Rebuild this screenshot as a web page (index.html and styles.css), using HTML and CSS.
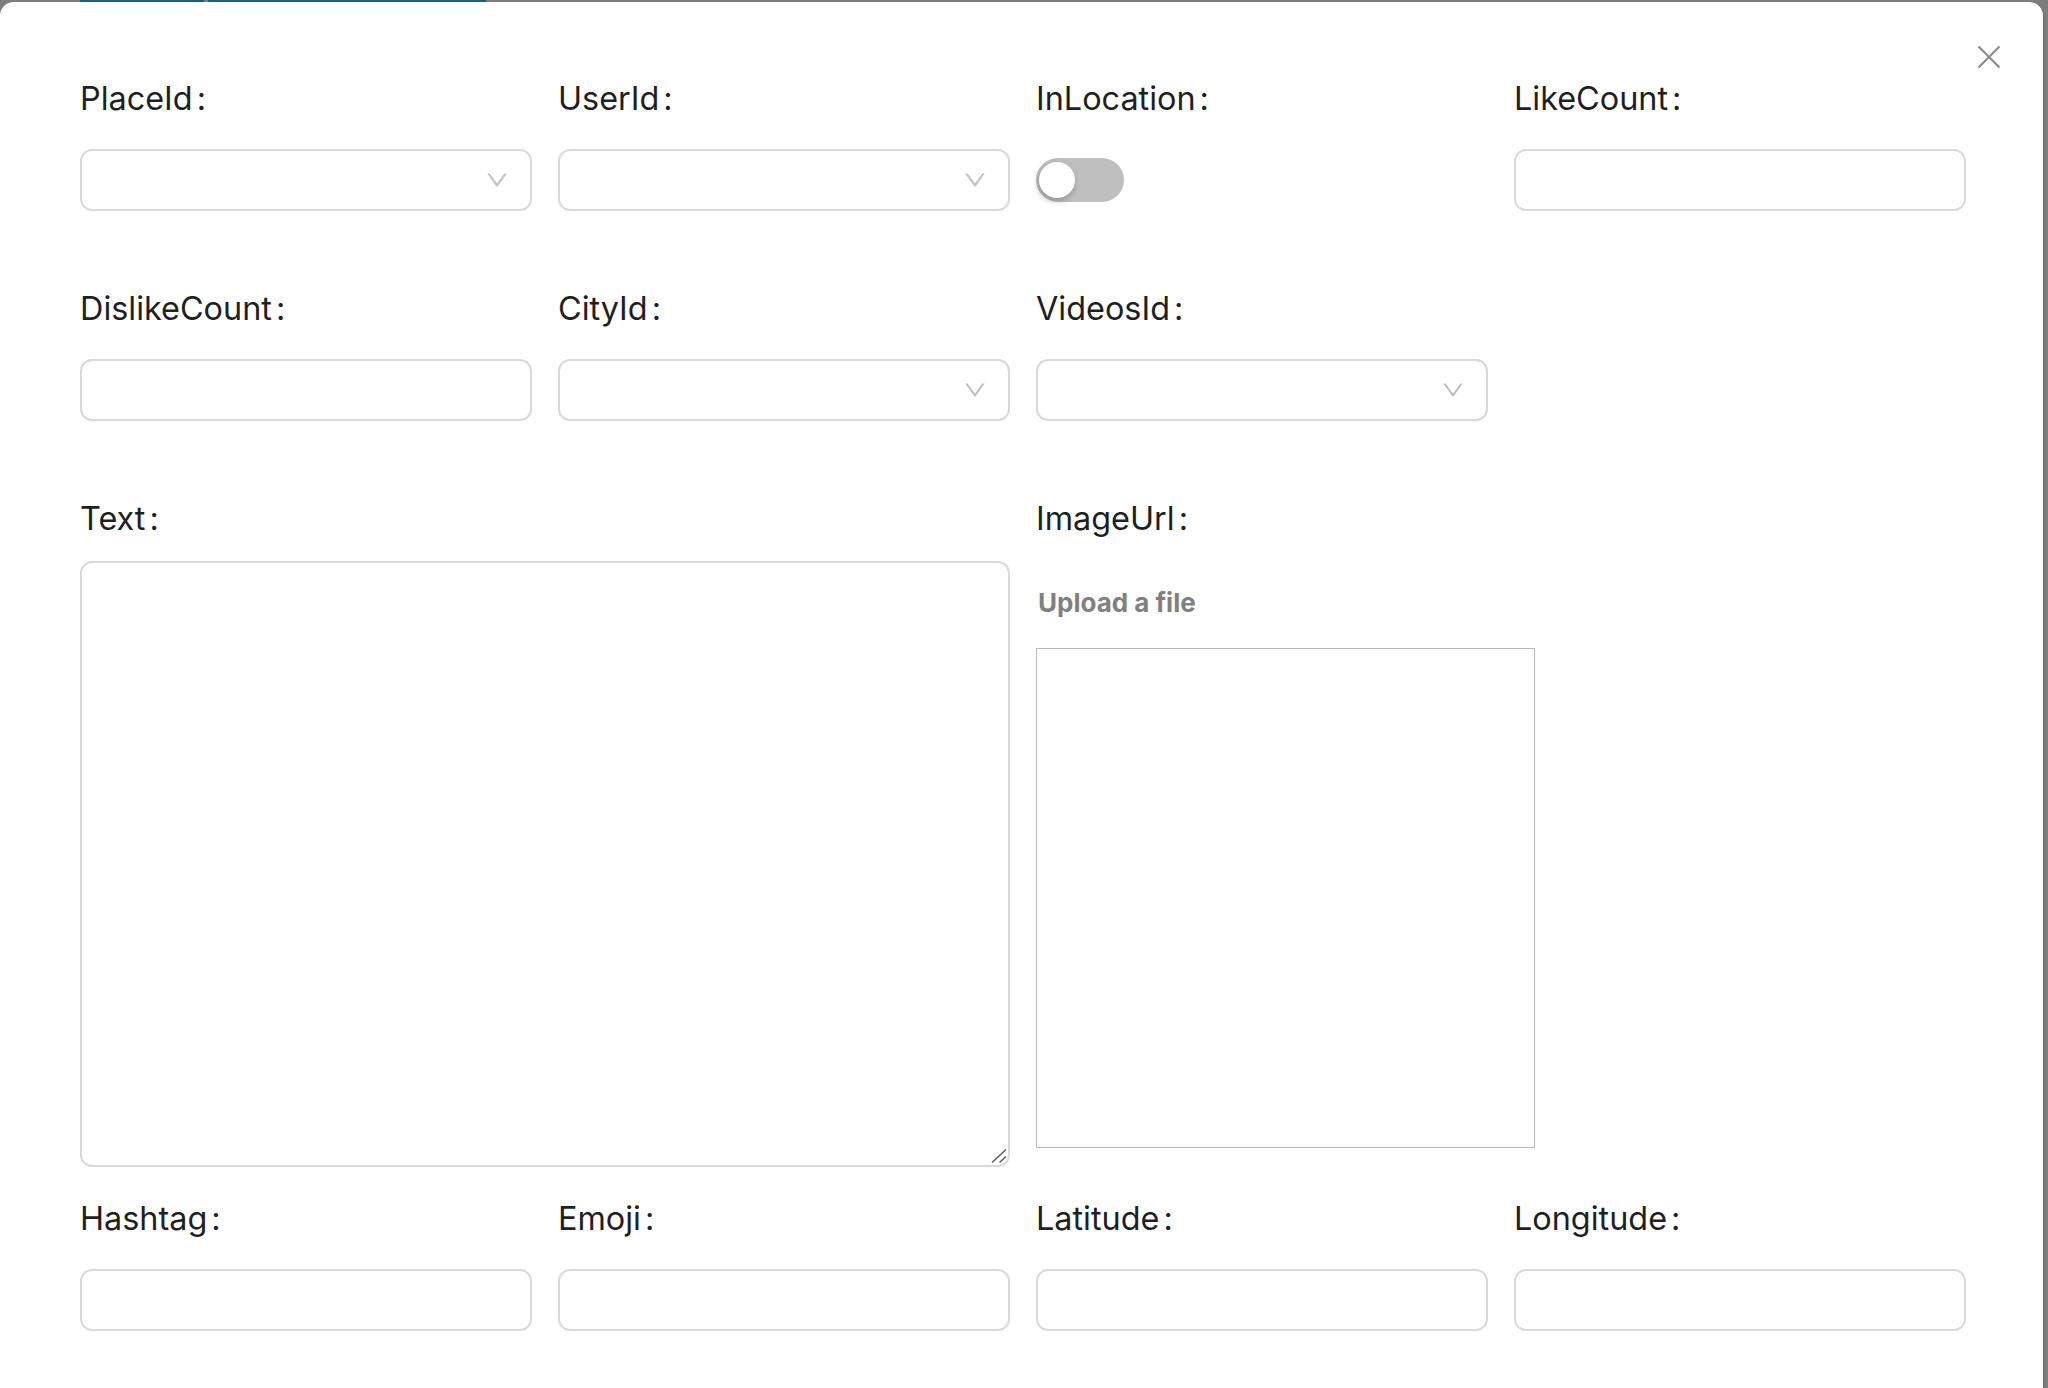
FILE: index.html
```html
<!DOCTYPE html>
<html lang="en">
<head>
<meta charset="utf-8">
<title>Edit post</title>
<link rel="stylesheet" href="styles.css">
</head>
<body>
<div class="backdrop-strip">
  <span class="tab tab-a"></span>
  <span class="tab tab-b"></span>
</div>
<div class="modal">
  <button class="close" type="button" aria-label="Close">
    <svg viewBox="0 0 24 24" width="24" height="24"><path d="M1.5 1.5 L22.5 22.5 M22.5 1.5 L1.5 22.5" stroke="#8c8c8c" stroke-width="2.2" fill="none" stroke-linecap="butt"/></svg>
  </button>
  <form class="form">
    <div class="item">
      <label class="label">PlaceId<span class="colon">:</span></label>
      <div class="select"><svg class="arrow" viewBox="0 0 1024 1024"><path d="M884 256h-75c-5.1 0-9.9 2.5-12.9 6.6L512 654.2 227.9 262.6c-3-4.1-7.8-6.6-12.9-6.6h-75c-6.5 0-10.3 7.4-6.5 12.7l352.6 486.1c12.8 17.6 39 17.6 51.7 0l352.6-486.1c3.9-5.3.1-12.7-6.4-12.7z"/></svg></div>
    </div>
    <div class="item">
      <label class="label">UserId<span class="colon">:</span></label>
      <div class="select"><svg class="arrow" viewBox="0 0 1024 1024"><path d="M884 256h-75c-5.1 0-9.9 2.5-12.9 6.6L512 654.2 227.9 262.6c-3-4.1-7.8-6.6-12.9-6.6h-75c-6.5 0-10.3 7.4-6.5 12.7l352.6 486.1c12.8 17.6 39 17.6 51.7 0l352.6-486.1c3.9-5.3.1-12.7-6.4-12.7z"/></svg></div>
    </div>
    <div class="item">
      <label class="label">InLocation<span class="colon">:</span></label>
      <div class="control-box"><button class="switch" type="button"><span class="knob"></span></button></div>
    </div>
    <div class="item">
      <label class="label">LikeCount<span class="colon">:</span></label>
      <input class="input" type="text">
    </div>

    <div class="item">
      <label class="label">DislikeCount<span class="colon">:</span></label>
      <input class="input" type="text">
    </div>
    <div class="item">
      <label class="label">CityId<span class="colon">:</span></label>
      <div class="select"><svg class="arrow" viewBox="0 0 1024 1024"><path d="M884 256h-75c-5.1 0-9.9 2.5-12.9 6.6L512 654.2 227.9 262.6c-3-4.1-7.8-6.6-12.9-6.6h-75c-6.5 0-10.3 7.4-6.5 12.7l352.6 486.1c12.8 17.6 39 17.6 51.7 0l352.6-486.1c3.9-5.3.1-12.7-6.4-12.7z"/></svg></div>
    </div>
    <div class="item">
      <label class="label">VideosId<span class="colon">:</span></label>
      <div class="select"><svg class="arrow" viewBox="0 0 1024 1024"><path d="M884 256h-75c-5.1 0-9.9 2.5-12.9 6.6L512 654.2 227.9 262.6c-3-4.1-7.8-6.6-12.9-6.6h-75c-6.5 0-10.3 7.4-6.5 12.7l352.6 486.1c12.8 17.6 39 17.6 51.7 0l352.6-486.1c3.9-5.3.1-12.7-6.4-12.7z"/></svg></div>
    </div>
    <div class="item empty"></div>

    <div class="item item-text span2">
      <label class="label label-tight">Text<span class="colon">:</span></label>
      <div class="textarea-wrap">
        <textarea class="textarea"></textarea>
        <svg class="resize-grip" viewBox="0 0 16 16" width="16" height="16"><path d="M1 14.5 L15 1.5 M8.5 14.5 L15 8.5" stroke="#5a5a5a" stroke-width="1.5" fill="none"/></svg>
      </div>
    </div>
    <div class="item item-text span2">
      <label class="label">ImageUrl<span class="colon">:</span></label>
      <div class="upload-title">Upload a file</div>
      <div class="image-box"></div>
    </div>

    <div class="item">
      <label class="label">Hashtag<span class="colon">:</span></label>
      <input class="input" type="text">
    </div>
    <div class="item">
      <label class="label">Emoji<span class="colon">:</span></label>
      <input class="input" type="text">
    </div>
    <div class="item">
      <label class="label">Latitude<span class="colon">:</span></label>
      <input class="input" type="text">
    </div>
    <div class="item">
      <label class="label">Longitude<span class="colon">:</span></label>
      <input class="input" type="text">
    </div>
  </form>
</div>
</body>
</html>
```

FILE: styles.css
```css
html, body {
  margin: 0;
  padding: 0;
  height: 100%;
  overflow: hidden;
}

body {
  background: #7d7d7d;
  font-family: Inter, "Noto Sans", sans-serif;
  color: #1f1f1f;
}

.backdrop-strip {
  height: 2px;
  display: flex;
  padding-left: 80px;
  gap: 4px;
}

.tab {
  display: block;
  height: 2px;
  background: #1d5d7b;
}

.tab-a { width: 124px; }
.tab-b { width: 278px; }

.modal {
  position: relative;
  background: #ffffff;
  width: 2044px;
  height: 1386px;
  border-radius: 14px 14px 0 0;
  box-sizing: border-box;
  padding: 73px 0 0 80px;
  border-right: 1px solid #6a6a6a;
}

.close {
  position: absolute;
  top: 43px;
  right: 42px;
  width: 24px;
  height: 24px;
  padding: 0;
  margin: 0;
  border: 0;
  background: transparent;
  display: block;
  cursor: pointer;
}

.close svg { display: block; }

.form {
  display: grid;
  grid-template-columns: repeat(4, 452px);
  column-gap: 26px;
  align-items: start;
}

.item {
  display: flex;
  flex-direction: column;
  margin-bottom: 74px;
}

.item-text {
  margin-bottom: 28px;
}

.span2 {
  grid-column: span 2;
}

.label {
  display: block;
  font-size: 32.4px;
  line-height: 44px;
  height: 44px;
  padding-top: 2px;
  font-weight: 400;
  color: #1f1f1f;
  margin-bottom: 28px;
  white-space: nowrap;
}

.label-tight {
  margin-bottom: 20px;
}

.colon {
  margin-left: 4px;
}

.input,
.select {
  display: block;
  box-sizing: border-box;
  width: 452px;
  height: 62px;
  border: 2px solid #d9d9d9;
  border-radius: 12px;
  background: #ffffff;
  margin: 0;
  padding: 0 22px;
  font-family: Inter, "Noto Sans", sans-serif;
  font-size: 28px;
  outline: none;
}

.select {
  position: relative;
}

.arrow {
  position: absolute;
  right: 20px;
  top: 50%;
  width: 26px;
  height: 26px;
  margin-top: -13px;
  fill: #bfbfbf;
}

.control-box {
  height: 62px;
  display: flex;
  align-items: center;
}

.switch {
  position: relative;
  width: 88px;
  height: 44px;
  border: 0;
  margin: 0;
  padding: 0;
  border-radius: 22px;
  background: #bfbfbf;
  cursor: pointer;
}

.knob {
  position: absolute;
  top: 4px;
  left: 3px;
  width: 36px;
  height: 36px;
  border-radius: 50%;
  background: #ffffff;
  box-shadow: -1px 3px 6px rgba(0, 35, 11, 0.28);
}

.textarea-wrap {
  position: relative;
  width: 930px;
  height: 606px;
}

.textarea {
  display: block;
  box-sizing: border-box;
  width: 930px;
  height: 606px;
  margin: 0;
  border: 2px solid #d9d9d9;
  border-radius: 12px;
  padding: 8px 22px;
  font-family: Inter, "Noto Sans", sans-serif;
  font-size: 28px;
  outline: none;
  resize: none;
}

.resize-grip {
  position: absolute;
  right: 3px;
  bottom: 3px;
  display: block;
}

.upload-title {
  margin-top: 16px;
  font-size: 26px;
  line-height: 36px;
  font-weight: 700;
  color: #808080;
  padding-left: 2px;
}

.image-box {
  margin-top: 27px;
  width: 499px;
  height: 500px;
  box-sizing: border-box;
  border: 1px solid #b9b9b9;
}
```
